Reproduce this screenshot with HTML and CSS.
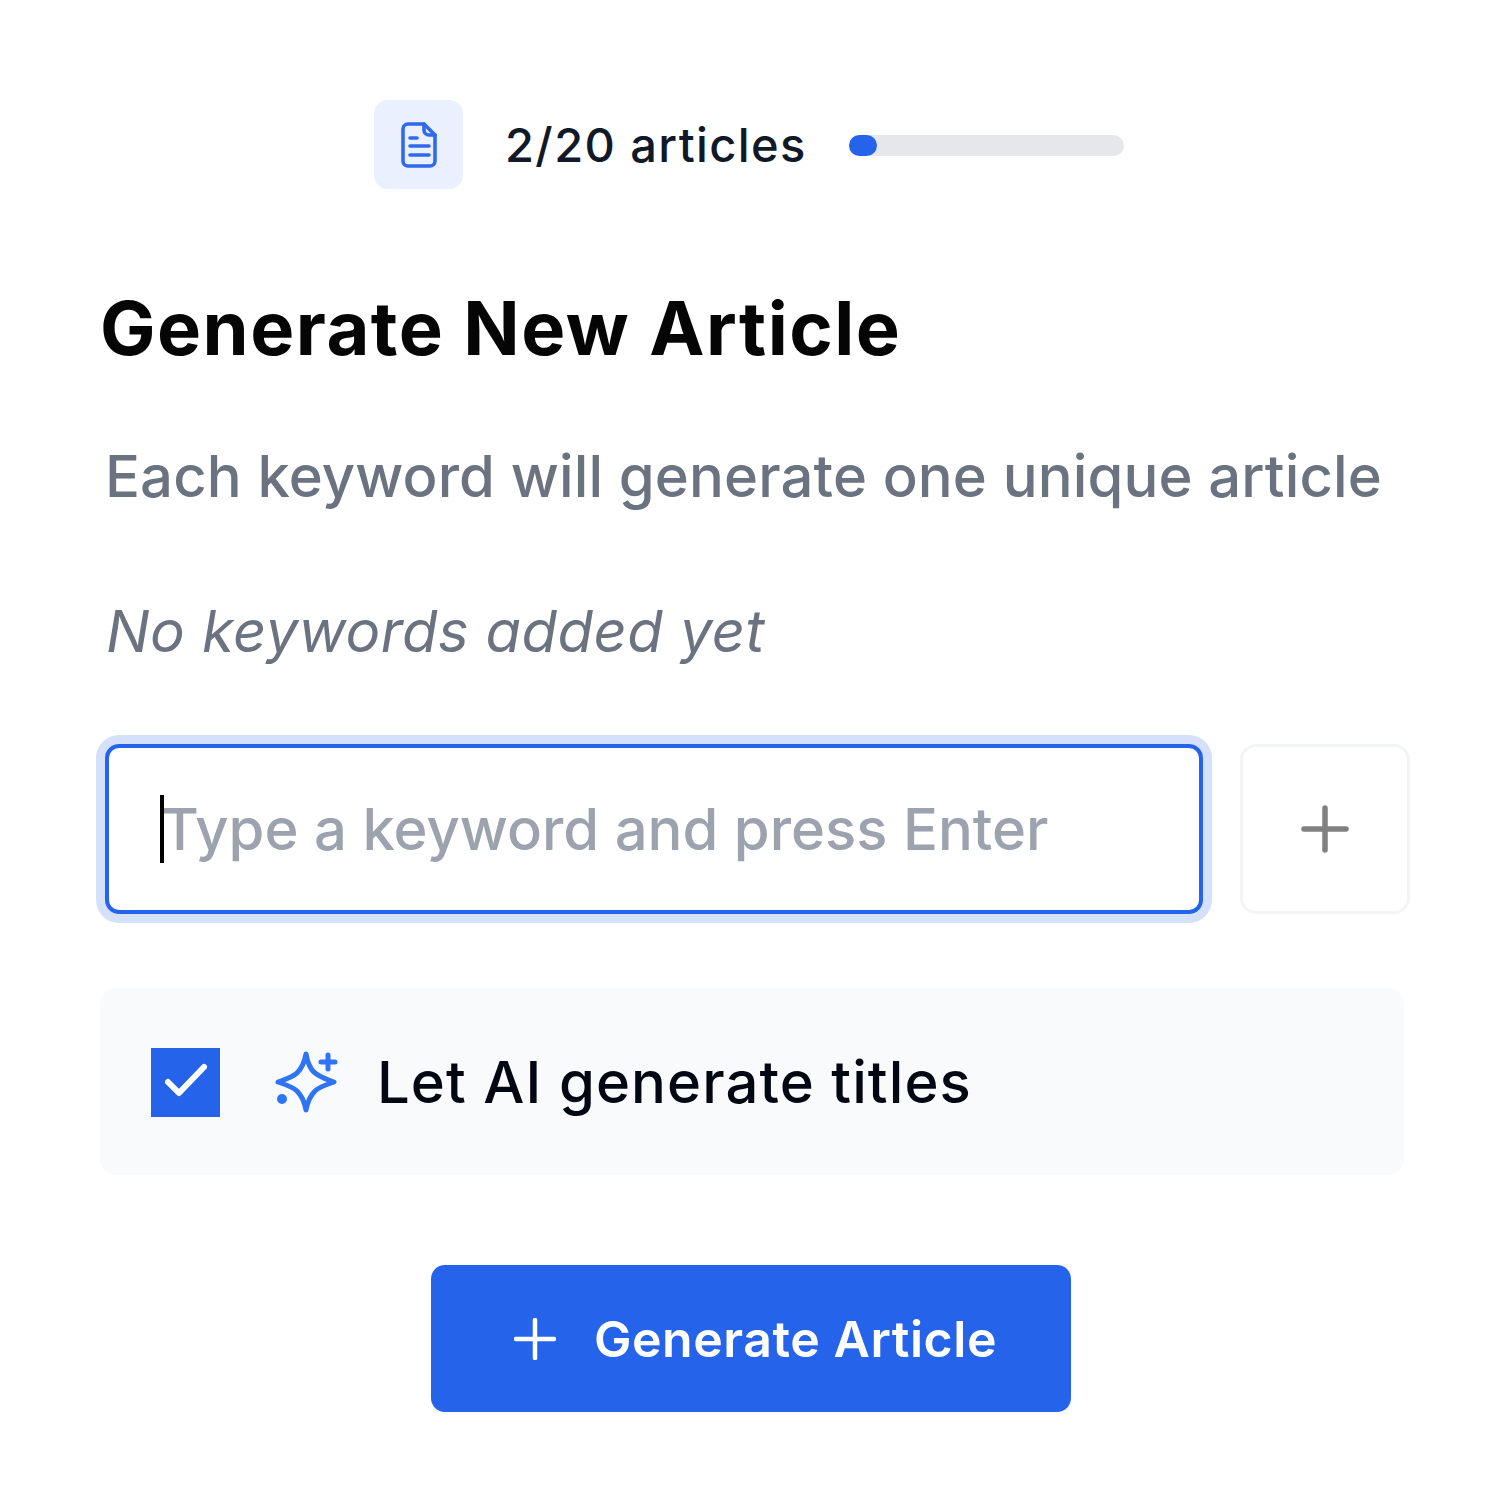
FILE: index.html
```html
<!DOCTYPE html>
<html>
<head>
  <link rel="stylesheet" href="styles.css">
</head>
<body>
  <div class="container">
    <div class="usage">
      <div class="usage-icon">
        <svg viewBox="0 0 36 46" fill="none" stroke="currentColor" stroke-width="3.6" stroke-linecap="round" stroke-linejoin="round">
          <path d="M7 2h16l11 11v26a5 5 0 01-5 5H7a5 5 0 01-5-5V7a5 5 0 015-5z"/>
          <path d="M23 2v6a5 5 0 005 5h6"/>
          <path d="M9 16h7M9 24h19M9 33h19"/>
        </svg>
      </div>
      <span class="usage-text">2/20 articles</span>
      <div class="progress"><div class="progress-fill"></div></div>
    </div>

    <h1 class="title">Generate New Article</h1>
    <p class="subtitle">Each keyword will generate one unique article</p>
    <p class="empty">No keywords added yet</p>

    <div class="keyword-row">
      <div class="keyword-input">
        <span class="caret"></span>
        <input type="text" placeholder="Type a keyword and press Enter">
      </div>
      <button class="add-button">
        <svg viewBox="0 0 48 48" fill="none" stroke="currentColor" stroke-width="5.5" stroke-linecap="round">
          <path d="M24 3v42M3 24h42"/>
        </svg>
      </button>
    </div>

    <div class="ai-option">
      <span class="checkbox">
        <svg viewBox="0 0 69 69" fill="none" stroke="#fff" stroke-width="6" stroke-linecap="round" stroke-linejoin="round">
          <path d="M17 34l11 11 25-26"/>
        </svg>
      </span>
      <svg class="sparkle" viewBox="0 0 66 64" fill="none" stroke="currentColor" stroke-width="5" stroke-linecap="round" stroke-linejoin="round">
        <path d="M32 4c2 11 5 16 9 19s10 6 19 9c-9 3-15 5-19 9s-7 8-9 19c-2-11-5-15-9-19s-10-6-19-9c9-3 15-5 19-9s7-8 9-19z"/>
        <path d="M54 5v14M47 12h14"/>
        <circle cx="8" cy="49" r="5" fill="currentColor" stroke="none"/>
      </svg>
      <span class="ai-label">Let AI generate titles</span>
    </div>

    <div class="actions">
      <button class="generate">
        <svg viewBox="0 0 42 42" fill="none" stroke="currentColor" stroke-width="4.5" stroke-linecap="round">
          <path d="M21 2v38M2 21h38"/>
        </svg>
        Generate Article
      </button>
    </div>
  </div>
</body>
</html>
```

FILE: styles.css
```css
* {
  margin: 0;
  padding: 0;
  box-sizing: border-box;
}

body {
  background: #fff;
  font-family: Inter, 'Liberation Sans', sans-serif;
}

.container {
  width: 1500px;
  height: 1500px;
  padding: 100px 90px 0 100px;
  display: flex;
  flex-direction: column;
}

.usage {
  display: flex;
  align-items: center;
  margin-left: 274px;
}

.usage-icon {
  width: 89px;
  height: 89px;
  background: #eaf0fd;
  border-radius: 14px;
  color: #2f69ee;
  display: flex;
  align-items: center;
  justify-content: center;
}

.usage-icon svg {
  width: 36px;
  height: 46px;
}

.usage-text {
  margin-left: 42px;
  font-size: 47px;
  font-weight: 550;
  letter-spacing: 1.4px;
  color: #111827;
  white-space: nowrap;
}

.progress {
  margin-left: 42px;
  margin-top: 2px;
  width: 275px;
  height: 21px;
  background: #e5e7eb;
  border-radius: 11px;
}

.progress-fill {
  width: 28px;
  height: 21px;
  background: #2563eb;
  border-radius: 11px;
}

.title {
  margin-top: 95px;
  font-size: 74px;
  font-weight: 700;
  letter-spacing: 1.5px;
  line-height: 88px;
  color: #050505;
}

.subtitle {
  margin-top: 69px;
  margin-left: 5px;
  font-size: 58px;
  font-weight: 450;
  letter-spacing: 0.13px;
  line-height: 70px;
  color: #6b7280;
  white-space: nowrap;
}

.empty {
  margin-top: 85px;
  margin-left: 6px;
  font-size: 58px;
  font-weight: 450;
  letter-spacing: 0.4px;
  line-height: 70px;
  font-style: italic;
  color: #6b7280;
}

.keyword-row {
  display: flex;
  gap: 37px;
  margin-top: 78px;
  margin-left: 5px;
  margin-right: -5px;
}

.keyword-input {
  position: relative;
  width: 1098px;
  height: 170px;
  border: 4px solid #2563eb;
  border-radius: 14px;
  box-shadow: 0 0 0 9px #d5e0fb;
  padding: 0 50px 0 52px;
  display: flex;
  align-items: center;
}

.keyword-input input {
  width: 100%;
  border: none;
  outline: none;
  background: none;
  font-family: inherit;
  font-size: 58px;
  font-weight: 450;
  color: #111827;
}

.keyword-input input::placeholder {
  color: #9ca3af;
  opacity: 1;
}

.caret {
  position: absolute;
  left: 51px;
  top: 47px;
  width: 4px;
  height: 68px;
  background: #000;
}

.add-button {
  width: 170px;
  height: 170px;
  background: #fff;
  border: 3px solid #f3f4f6;
  border-radius: 16px;
  color: #808080;
  display: flex;
  align-items: center;
  justify-content: center;
}

.add-button svg {
  width: 48px;
  height: 48px;
}

.ai-option {
  margin-top: 74px;
  margin-right: 6px;
  height: 187px;
  background: #f9fafb;
  border-radius: 16px;
  padding-left: 51px;
  display: flex;
  align-items: center;
}

.checkbox {
  width: 69px;
  height: 69px;
  margin-top: 1px;
  background: #2563eb;
  display: flex;
}

.sparkle {
  width: 66px;
  height: 64px;
  margin-left: 54px;
  color: #2f74f5;
}

.ai-label {
  margin-left: 37px;
  font-size: 58px;
  font-weight: 550;
  letter-spacing: 1.07px;
  color: #030712;
}

.actions {
  margin-top: 90px;
  display: flex;
  justify-content: center;
  margin-right: 8px;
}

.generate {
  width: 640px;
  height: 147px;
  padding-left: 9px;
  background: #2563eb;
  border: none;
  border-radius: 14px;
  color: #fff;
  font-family: inherit;
  font-size: 50px;
  font-weight: 600;
  letter-spacing: 0.55px;
  display: flex;
  align-items: center;
  justify-content: center;
  gap: 38px;
}

.generate svg {
  width: 42px;
  height: 42px;
}
```
